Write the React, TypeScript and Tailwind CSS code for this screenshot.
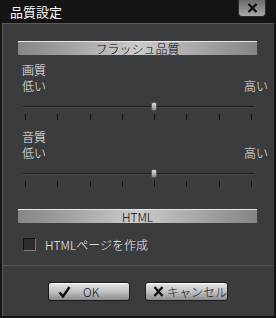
import React from "react";

function SectionBar({ label }: { label: string }) {
  return (
    <div className="w-[239px] h-[14px] flex items-center justify-center border-t border-[#e8e8e8] bg-gradient-to-r from-[#858585] via-[#cbcbcb] to-[#858585] text-[12px] leading-[12px] text-black">
      {label}
    </div>
  );
}

function Slider() {
  return (
    <div className="ml-[5px] w-[231px] flex flex-col">
      <div className="relative h-[9px] flex items-center">
        <div className="w-full h-[2px] bg-[#1c1c1c] border-b border-[#4a4b4d]" />
        <div className="absolute left-[128px] top-0 w-[6px] h-[9px] rounded-[2px] bg-gradient-to-b from-[#e0e0e0] to-[#8a8a8a] border border-[#5a5a5a]" />
      </div>
      <div className="mt-[3px] ml-[2px] w-[227px] h-[6px] flex justify-between">
        {[0, 1, 2, 3, 4, 5, 6, 7].map((i) => (
          <div key={i} className="w-[1px] h-full bg-[#111]" />
        ))}
      </div>
    </div>
  );
}

function QualityBlock({ title, top }: { title: string; top: string }) {
  return (
    <div className={`flex flex-col ${top}`}>
      <div className="pl-[4px] text-[12px] leading-[12px] text-[#f2f2f2]">{title}</div>
      <div className="mt-[4px] pl-[4px] pr-[6px] flex justify-between text-[12px] leading-[12px] text-[#f2f2f2]">
        <span>低い</span>
        <span>高い</span>
      </div>
      <div className="mt-[10px]">
        <Slider />
      </div>
    </div>
  );
}

export default function App() {
  return (
    <div className="w-[276px] h-[318px] bg-[#141414] flex flex-col font-light font-['Noto_Sans_CJK_JP','Liberation_Sans',sans-serif]">
      <div className="h-[23px] shrink-0 flex items-start justify-between pl-[10px] pr-[10px]">
        <span className="mt-[5px] text-[13px] leading-[13px] text-white font-normal">品質設定</span>
        <div className="w-[28px] h-[17px] rounded-b-[4px] bg-gradient-to-b from-[#6a6a6a] to-[#a8a8a8] border border-t-0 border-[#2a2a2a] flex items-center justify-center">
          <svg width="11" height="10" viewBox="0 0 11 10">
            <path d="M1.5 1 L9.5 9 M9.5 1 L1.5 9" stroke="#111" strokeWidth="2.4" />
          </svg>
        </div>
      </div>
      <div className="flex-1 ml-[2px] mr-[2px] mb-[2px] border-t border-l border-[#5a5a5a] bg-[#3b3c3e] flex flex-col">
        <div className="pl-[15px] pt-[17px] flex flex-col">
          <SectionBar label="フラッシュ品質" />
          <QualityBlock title="画質" top="mt-[9px]" />
          <QualityBlock title="音質" top="mt-[11px]" />
          <div className="mt-[22px]">
            <SectionBar label="HTML" />
          </div>
          <div className="mt-[15px] ml-[5px] flex items-center gap-[9px]">
            <div className="w-[13px] h-[13px] bg-[#2c2c2c] border border-t-[#111] border-l-[#111] border-b-[#7a7a7a] border-r-[#7a7a7a]" />
            <span className="text-[12px] leading-[12px] text-[#f2f2f2]">HTMLページを作成</span>
          </div>
        </div>
        <div className="mt-[14px] h-[1px] bg-[#555658]" />
        <div className="mt-[16px] pl-[45px] flex gap-[15px]">
          <button className="w-[82px] h-[19px] rounded-[3px] border border-[#1a1a1a] bg-gradient-to-b from-[#e6e6e6] via-[#c2c2c2] to-[#8c8c8c] shadow-[inset_0_1px_0_#ffffff] flex items-center pl-[9px] text-[12px] leading-[12px] text-[#111]">
            <svg width="13" height="12" viewBox="0 0 13 12">
              <path d="M1.5 6.5 L5 10.5 L11.5 1" stroke="#111" strokeWidth="2.4" fill="none" />
            </svg>
            <span className="ml-[12px]">OK</span>
          </button>
          <button className="w-[83px] h-[19px] rounded-[3px] border border-[#1a1a1a] bg-gradient-to-b from-[#e6e6e6] via-[#c2c2c2] to-[#8c8c8c] shadow-[inset_0_1px_0_#ffffff] flex items-center pl-[7px] text-[12px] leading-[12px] text-[#111]">
            <svg width="11" height="11" viewBox="0 0 11 11">
              <path d="M1.5 1 L9.5 10 M9.5 1 L1.5 10" stroke="#111" strokeWidth="2.4" />
            </svg>
            <span className="ml-[3px]">キャンセル</span>
          </button>
        </div>
      </div>
    </div>
  );
}
